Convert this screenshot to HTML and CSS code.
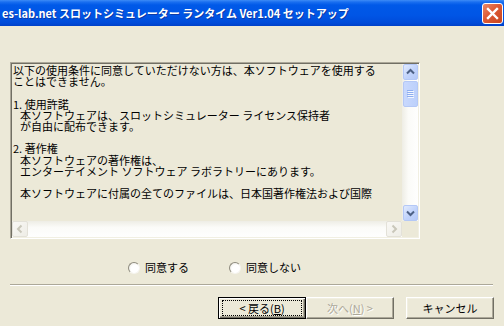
FILE: index.html
```html
<!DOCTYPE html>
<html lang="ja">
<head>
    <meta charset="UTF-8">
    <title>es-lab.net セットアップ</title>
    <link rel="stylesheet" href="styles.css">
</head>
<body>
<div class="window">
    <div class="titlebar">
        <span class="title">es-lab.net スロットシミュレーター ランタイム Ver1.04 セットアップ</span>
        <span class="close">
            <svg width="19" height="19" viewBox="0 0 19 19"><path d="M5 5 L14 14 M14 5 L5 14" stroke="#fff" stroke-width="2.4" stroke-linecap="square"/></svg>
        </span>
    </div>

    <div class="dialog">
        <div class="license">
            <div class="text">
                <div>以下の使用条件に同意していただけない方は、本ソフトウェアを使用する</div>
                <div>ことはできません。</div>
                <div>&nbsp;</div>
                <div>1. 使用許諾</div>
                <div class="ind">本ソフトウェアは、スロットシミュレーター ライセンス保持者</div>
                <div class="ind">が自由に配布できます。</div>
                <div>&nbsp;</div>
                <div>2. 著作権</div>
                <div class="ind">本ソフトウェアの著作権は、</div>
                <div class="ind">エンターテイメント ソフトウェア ラボラトリーにあります。</div>
                <div>&nbsp;</div>
                <div class="ind">本ソフトウェアに付属の全てのファイルは、日本国著作権法および国際</div>
            </div>
            <div class="vscroll">
                <span class="sbtn">
                    <svg width="13" height="14" viewBox="0 0 13 14"><polyline points="3,8.5 6.5,5 10,8.5" fill="none" stroke="#4d6185" stroke-width="2"/></svg>
                </span>
                <span class="thumb">
                    <svg width="7" height="8" viewBox="0 0 7 8"><path d="M0 0.5 H6 M0 2.5 H6 M0 4.5 H6 M0 6.5 H6" stroke="#8eaef0" stroke-width="1"/><path d="M1 1.5 H7 M1 3.5 H7 M1 5.5 H7 M1 7.5 H7" stroke="#f2f6fe" stroke-width="1"/></svg>
                </span>
                <span class="track"></span>
                <span class="sbtn">
                    <svg width="13" height="14" viewBox="0 0 13 14"><polyline points="3,5.5 6.5,9 10,5.5" fill="none" stroke="#4d6185" stroke-width="2"/></svg>
                </span>
            </div>
            <div class="hscroll">
                <span class="hbtn">
                    <svg width="14" height="14" viewBox="0 0 14 14"><polyline points="8.5,3.5 5,7 8.5,10.5" fill="none" stroke="#c9c7ba" stroke-width="2"/></svg>
                </span>
                <span class="htrack"></span>
                <span class="hbtn">
                    <svg width="14" height="14" viewBox="0 0 14 14"><polyline points="5.5,3.5 9,7 5.5,10.5" fill="none" stroke="#c9c7ba" stroke-width="2"/></svg>
                </span>
            </div>
            <div class="corner"></div>
        </div>

        <div class="choices">
            <label class="choice"><span class="radio"></span>同意する</label>
            <label class="choice"><span class="radio"></span>同意しない</label>
        </div>

        <div class="sep"></div>

        <div class="buttons">
            <span class="btn default"><span class="focus">&lt; 戻る(<u>B</u>)</span></span>
            <span class="btn disabled">次へ(<u>N</u>) &gt;</span>
            <span class="btn cancel">キャンセル</span>
        </div>
    </div>
</div>
</body>
</html>
```

FILE: styles.css
```css
body {
    margin: 0;
    background-color: #ece9d8;
    font-family: "Noto Sans CJK JP", "DejaVu Sans", sans-serif;
    font-size: 11px;
    color: #000;
}
.window {
    width: 504px;
    height: 326px;
    overflow: hidden;
}
.titlebar {
    height: 26px;
    display: flex;
    align-items: center;
    justify-content: space-between;
    padding-left: 2px;
    background: linear-gradient(#3d8cf6 0, #1a6ff0 2px, #0059e8 5px, #0055e5 60%, #004bd9 88%, #0040c8 100%);
}
.title {
    color: #fff;
    font-weight: bold;
    font-size: 11px;
    line-height: 13px;
    padding-top: 1px;
    text-shadow: 1px 1px 0 #0b3aa8;
    white-space: nowrap;
}
.close {
    width: 19px;
    height: 19px;
    margin-right: 1px;
    margin-top: 1px;
    border: 1px solid #fff;
    border-radius: 3px;
    background: linear-gradient(135deg, #e9896a 0%, #dc5a35 45%, #c8451e 100%);
    display: flex;
}
.dialog {
    padding: 36px 0 0 10px;
}
.license {
    width: 406px;
    height: 173px;
    padding: 1px;
    border: 1px solid;
    border-color: #aca899 #fff #fff #aca899;
    box-shadow: inset 1px 1px #716f64, inset -1px -1px #f1efe2;
    display: grid;
    grid-template-columns: 390px 16px;
    grid-template-rows: 157px 16px;
}
.text {
    padding: 1px 0 0 1px;
    line-height: 11.2px;
    white-space: nowrap;
}
.ind {
    padding-left: 7px;
}
.vscroll {
    display: flex;
    flex-direction: column;
    background: linear-gradient(to right, #eeede5, #fbfbf8 40%, #fefefe);
}
.sbtn {
    width: 13px;
    height: 14px;
    margin-left: 1px;
    border: 1px solid #b4c8f6;
    border-radius: 2px;
    background: linear-gradient(135deg, #e2ebfe, #c1d3fb 55%, #b5c9f7);
    display: flex;
}
.thumb {
    width: 13px;
    height: 24px;
    margin: 1px 0 0 1px;
    border: 1px solid #b4c8f6;
    border-radius: 2px;
    background: linear-gradient(to right, #c8d8fd, #bcd0fb);
    display: flex;
    align-items: center;
    justify-content: center;
}
.track {
    flex: 1;
}
.hscroll {
    display: flex;
    background: linear-gradient(#eeede5, #fbfbf8 40%, #fefefe);
}
.hbtn {
    width: 14px;
    height: 14px;
    border: 1px solid #e3e1d8;
    border-radius: 2px;
    background: linear-gradient(135deg, #f9f8f4, #eeede6);
    display: flex;
}
.htrack {
    flex: 1;
}
.corner {
    background-color: #ece9d8;
}
.choices {
    display: flex;
    gap: 40px;
    margin: 22px 0 0 118px;
    height: 13px;
    align-items: center;
}
.choice {
    display: flex;
    align-items: center;
    gap: 5px;
    line-height: 13px;
}
.radio {
    width: 10px;
    height: 10px;
    border-radius: 50%;
    border: 1px solid;
    border-color: #8e8b7e #f6f5f0 #f6f5f0 #8e8b7e;
    background: radial-gradient(circle at 60% 60%, #fff 45%, #e6e4da);
}
.sep {
    width: 483px;
    margin-top: 10px;
    border-top: 1px solid #aca899;
    border-bottom: 1px solid #fff;
}
.buttons {
    width: 484px;
    margin-top: 11px;
    display: flex;
    justify-content: flex-end;
}
.btn {
    box-sizing: border-box;
    width: 88px;
    height: 22px;
    display: flex;
    align-items: center;
    justify-content: center;
    border: 1px solid;
    border-color: #fff #716f64 #716f64 #fff;
    box-shadow: inset -1px -1px #aca899, inset 1px 1px #f1efe2;
}
.btn u {
    text-decoration-thickness: 1px;
}
.default {
    border: 1px solid #000;
    box-shadow: inset 1px 1px #fff, inset -1px -1px #716f64, inset -2px -2px #aca899;
}
.focus {
    box-sizing: border-box;
    width: 80px;
    height: 16px;
    border: 1px dotted #000;
    display: flex;
    align-items: center;
    justify-content: center;
}
.disabled {
    color: #aca899;
    text-shadow: 1px 1px 0 #fff;
}
.cancel {
    margin-left: 12px;
}
```
